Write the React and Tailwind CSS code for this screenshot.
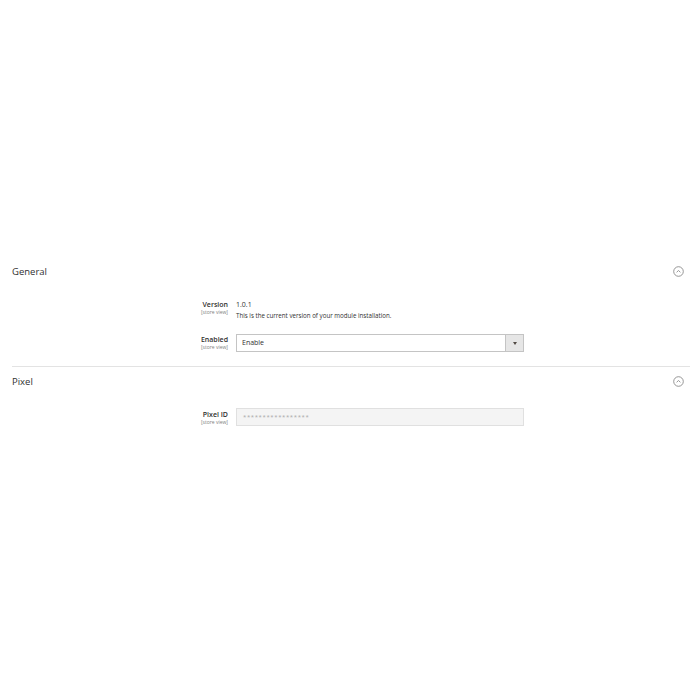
import React from "react";

const font = { fontFamily: '"Open Sans", "Liberation Sans", sans-serif' };

function ToggleIcon() {
  return (
    <svg width="11" height="11" viewBox="0 0 11 11" className="block">
      <circle cx="5.5" cy="5.5" r="4.8" fill="none" stroke="#8a8a8a" strokeWidth="0.9" />
      <path d="M3.6 6.3 L5.5 4.5 L7.4 6.3" fill="none" stroke="#8a8a8a" strokeWidth="0.9" />
    </svg>
  );
}

function SectionHeader({ title }) {
  return (
    <div className="flex h-[18px] items-center justify-between pr-[6px]">
      <span className="pt-[1px] text-[9.5px] leading-none text-[#303030]">{title}</span>
      <ToggleIcon />
    </div>
  );
}

function FieldLabel({ text }) {
  return (
    <div className="w-[216px] shrink-0 text-right">
      <div className="text-[7px] font-semibold leading-[9px] text-[#303030]">{text}</div>
      <div className="text-[5px] leading-[6px] text-[#808080]">[store view]</div>
    </div>
  );
}

export default function App() {
  return (
    <div
      className="min-h-[700px] w-[700px] bg-white pl-[12px] pr-[10px] pt-[262px] antialiased"
      style={font}
    >
      {/* General section */}
      <div className="border-b border-[#e3e3e3] pb-[14px]">
        <SectionHeader title="General" />

        <div className="mt-[20px] flex gap-[8px]">
          <FieldLabel text="Version" />
          <div className="w-[288px]">
            <div className="text-[7px] leading-[9px] text-[#303030]">1.0.1</div>
            <div className="mt-[3px] text-[6.2px] leading-[7px] text-[#303030]">
              This is the current version of your module installation.
            </div>
          </div>
        </div>

        <div className="mt-[15px] flex gap-[8px]">
          <div className="pt-[1px]">
            <FieldLabel text="Enabled" />
          </div>
          <div className="flex h-[18px] w-[288px] border border-[#c4c4c4] bg-white">
            <div className="flex flex-1 items-center pl-[5px] text-[7px] text-[#303030]">Enable</div>
            <div className="flex w-[18px] items-center justify-center border-l border-[#c4c4c4] bg-[#e6e6e6]">
              <svg width="4" height="3" viewBox="0 0 4 3">
                <path d="M0 0 L4 0 L2 3 Z" fill="#514943" />
              </svg>
            </div>
          </div>
        </div>
      </div>

      {/* Pixel section */}
      <div className="pt-[5px]">
        <SectionHeader title="Pixel" />

        <div className="mt-[18px] flex gap-[8px]">
          <div className="pt-[1.5px]">
            <FieldLabel text="Pixel ID" />
          </div>
          <div className="flex h-[18px] w-[288px] items-center border border-[#e0e0e0] bg-[#f4f4f4] pl-[6px] text-[6px] tracking-[0.6px] text-[#a8a8a8]">
            *****************
          </div>
        </div>
      </div>
    </div>
  );
}
